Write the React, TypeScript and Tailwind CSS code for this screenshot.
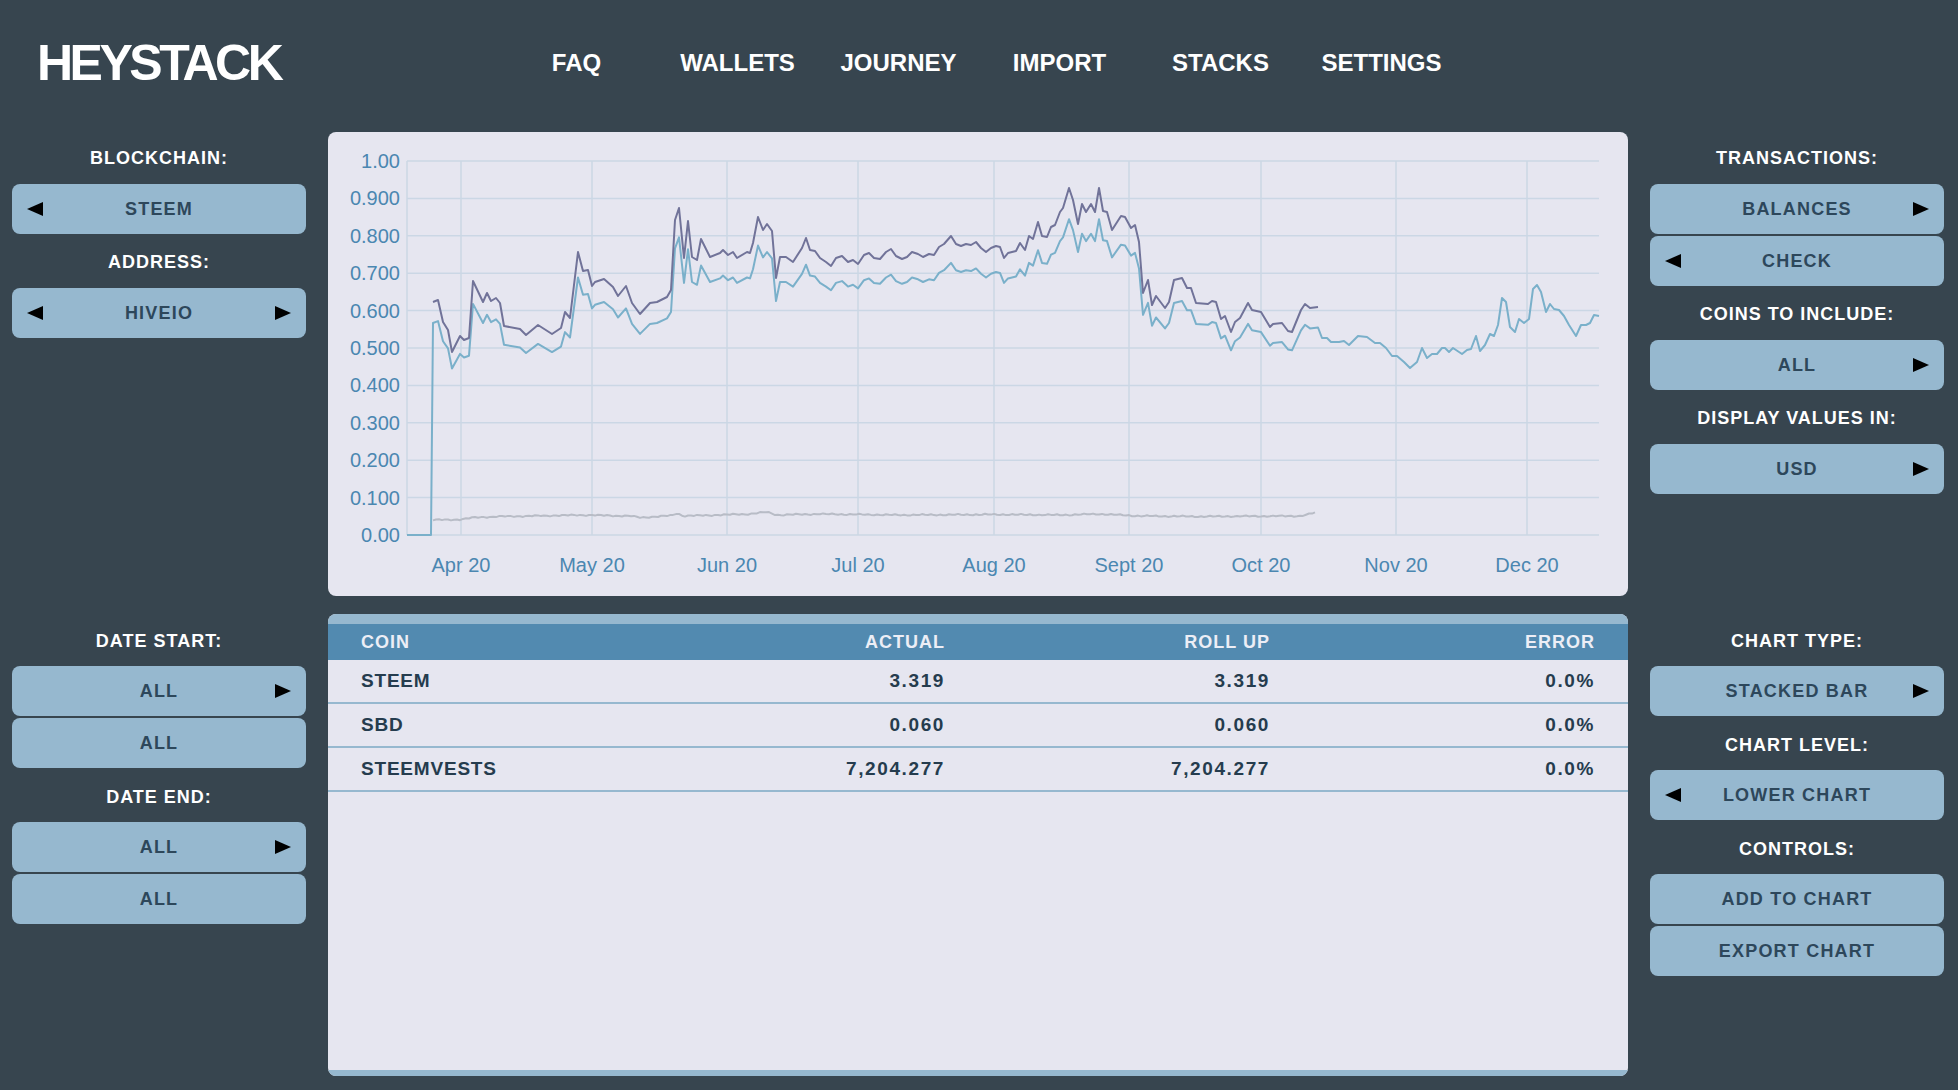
import React from "react";

type Pt = [number, number];

// purple series, page coordinates (chart svg uses a viewBox in page space)
const PURPLE: Pt[] = [
  [433, 302], [438, 300], [443, 322], [448, 330], [452, 352], [460, 336], [464, 340], [469, 338], [473, 281], [483, 302],
  [487, 293], [491, 301], [496, 298], [500, 303], [504, 326], [520, 329], [526, 335], [538, 325], [552, 334], [561, 328],
  [565, 312], [570, 318], [578, 252], [583, 271], [588, 270], [592, 286], [595, 282], [604, 279], [613, 287], [618, 296],
  [626, 286], [632, 303], [640, 314], [650, 303], [657, 302], [667, 297], [671, 290], [675, 220], [679, 208], [684, 258],
  [688, 221], [692, 257], [697, 260], [701, 239], [710, 257], [720, 253], [723, 250], [728, 255], [733, 252], [737, 258],
  [747, 252], [750, 253], [753, 243], [758, 217], [763, 230], [767, 224], [772, 231], [776, 278], [780, 257], [786, 257],
  [793, 262], [802, 248], [806, 238], [810, 250], [815, 251], [820, 258], [826, 262], [831, 266], [836, 258], [842, 256],
  [848, 262], [853, 260], [858, 264], [864, 255], [869, 253], [874, 258], [880, 259], [886, 252], [891, 249], [896, 256],
  [902, 259], [907, 257], [912, 252], [918, 254], [923, 257], [929, 254], [934, 255], [939, 247], [944, 244], [951, 236],
  [956, 244], [961, 246], [966, 244], [971, 245], [976, 242], [981, 248], [986, 252], [991, 248], [996, 246], [1000, 247],
  [1004, 258], [1008, 253], [1016, 251], [1020, 243], [1025, 250], [1029, 236], [1033, 239], [1038, 222], [1042, 236],
  [1047, 237], [1051, 227], [1055, 225], [1060, 212], [1063, 208], [1069, 188], [1073, 200], [1078, 224], [1082, 204],
  [1086, 212], [1091, 204], [1095, 212], [1099, 188], [1103, 211], [1107, 212], [1112, 230], [1121, 216], [1125, 217],
  [1131, 228], [1135, 225], [1139, 242], [1143, 293], [1148, 280], [1152, 305], [1156, 296], [1165, 308], [1169, 302],
  [1174, 280], [1182, 278], [1187, 288], [1191, 288], [1196, 303], [1208, 304], [1212, 301], [1216, 302], [1221, 319],
  [1225, 316], [1231, 332], [1235, 322], [1240, 318], [1248, 303], [1252, 310], [1261, 312], [1270, 327], [1273, 324],
  [1282, 323], [1288, 331], [1292, 332], [1301, 310], [1305, 304], [1310, 308], [1318, 307],
];

const BLUE_TAIL: Pt[] = [
  [1322, 338], [1327, 338], [1331, 342], [1339, 342], [1344, 341], [1349, 345], [1358, 336], [1367, 337], [1375, 343],
  [1380, 343], [1386, 348], [1392, 356], [1397, 356], [1404, 362], [1410, 368], [1417, 362], [1422, 348], [1427, 358],
  [1432, 354], [1437, 354], [1442, 348], [1445, 348], [1449, 352], [1453, 348], [1462, 354], [1467, 350], [1471, 349],
  [1476, 336], [1480, 351], [1485, 345], [1490, 334], [1494, 336], [1498, 325], [1502, 298], [1506, 302], [1510, 327],
  [1515, 332], [1519, 319], [1524, 323], [1529, 319], [1533, 289], [1537, 285], [1541, 292], [1546, 312], [1550, 304],
  [1554, 309], [1559, 310], [1564, 316], [1569, 325], [1576, 336], [1581, 325], [1586, 325], [1590, 323], [1594, 315],
  [1599, 316],
];

const BLUE: Pt[] = [
  [407, 535],
  [431, 535],
  ...PURPLE.map(([x, y]) => [x, 535 - (535 - y) * 0.91] as Pt),
  ...BLUE_TAIL,
];

const GRAY_KEYS: Pt[] = [
  [433, 520], [460, 519.5], [475, 517.5], [500, 516.5], [560, 515.5], [580, 515], [630, 516], [640, 517.5], [660, 516.5],
  [672, 515.5], [677, 513], [683, 516], [750, 514], [767, 512], [777, 515], [820, 514], [900, 515], [1000, 514.5],
  [1060, 515], [1100, 514], [1140, 516], [1200, 516.5], [1300, 516], [1310, 514], [1317, 512],
];

const GRAY: Pt[] = [];
for (let x = 433; x <= 1317; x += 3) {
  let i = 0;
  while (i < GRAY_KEYS.length - 2 && GRAY_KEYS[i + 1][0] < x) i++;
  const [x0, y0] = GRAY_KEYS[i];
  const [x1, y1] = GRAY_KEYS[i + 1];
  const t = Math.min(1, Math.max(0, (x - x0) / (x1 - x0)));
  GRAY.push([x, y0 + (y1 - y0) * t + 0.5 * Math.sin(x * 0.7) + 0.3 * Math.sin(x * 1.9)]);
}

const pts = (a: Pt[]) => a.map(([x, y]) => `${x},${y.toFixed(1)}`).join(" ");

const Y_LABELS = ["1.00", "0.900", "0.800", "0.700", "0.600", "0.500", "0.400", "0.300", "0.200", "0.100", "0.00"];
const X_TICKS: [number, string][] = [
  [461, "Apr 20"], [592, "May 20"], [727, "Jun 20"], [858, "Jul 20"], [994, "Aug 20"],
  [1129, "Sept 20"], [1261, "Oct 20"], [1396, "Nov 20"], [1527, "Dec 20"],
];

const Chart = () => {
  return (
    <svg viewBox="328 132 1300 464" width="1300" height="464" className="block">
      {Y_LABELS.map((l, i) => {
        const y = 161 + i * 37.4;
        return (
          <g key={l}>
            <line x1={407} x2={1599} y1={y} y2={y} stroke="#cbd7e5" strokeWidth={1.5} />
            <text x={400} y={y + 7} textAnchor="end" fontSize={20} fill="#4b87b1" fontFamily="Liberation Sans, Arial, sans-serif">
              {l}
            </text>
          </g>
        );
      })}
      <line x1={407} x2={407} y1={161} y2={535} stroke="#cbd7e5" strokeWidth={1.5} />
      {X_TICKS.map(([x, l]) => (
        <g key={l}>
          <line x1={x} x2={x} y1={161} y2={535} stroke="#cbd7e5" strokeWidth={1.5} />
          <text x={x} y={572} textAnchor="middle" fontSize={20} fill="#4b87b1" fontFamily="Liberation Sans, Arial, sans-serif">
            {l}
          </text>
        </g>
      ))}
      <polyline points={pts(GRAY)} fill="none" stroke="#b8bcc6" strokeWidth={2} strokeLinejoin="round" />
      <polyline points={pts(BLUE)} fill="none" stroke="#7ab0ca" strokeWidth={2} strokeLinejoin="round" />
      <polyline points={pts(PURPLE)} fill="none" stroke="#717399" strokeWidth={2} strokeLinejoin="round" />
    </svg>
  );
};

const Tri = ({ dir }: { dir: "left" | "right" }) => (
  <svg width="16" height="14" viewBox="0 0 16 14">
    <polygon points={dir === "left" ? "16,0 16,14 0,7" : "0,0 0,14 16,7"} fill="#000" />
  </svg>
);

type BtnProps = { text: string; left?: boolean; right?: boolean };

const Btn = ({ text, left, right }: BtnProps) => (
  <div className="h-[50px] rounded-[8px] bg-[#96b8cf] grid grid-cols-[46px_1fr_46px] items-center">
    <div className="flex justify-start pl-[15px]">{left && <Tri dir="left" />}</div>
    <div className="text-center text-[18px] font-bold tracking-[1.2px] text-[#2d475b]">{text}</div>
    <div className="flex justify-end pr-[15px]">{right && <Tri dir="right" />}</div>
  </div>
);

const Group = ({ label, buttons, top }: { label: string; buttons: BtnProps[]; top?: boolean }) => (
  <div className="flex flex-col">
    <div
      className={`h-[54px] ${top ? "pt-[2px]" : "pt-[4px]"} flex items-center justify-center text-white text-[18px] font-bold tracking-[1px]`}
    >
      {label}
    </div>
    <div className="flex flex-col gap-[2px]">
      {buttons.map((b, i) => (
        <Btn key={i} {...b} />
      ))}
    </div>
  </div>
);

const ROWS = [
  ["STEEM", "3.319", "3.319", "0.0%"],
  ["SBD", "0.060", "0.060", "0.0%"],
  ["STEEMVESTS", "7,204.277", "7,204.277", "0.0%"],
];

const Table = () => (
  <div className="mt-[2px] h-[462px] rounded-[8px] overflow-hidden bg-[#e6e6f0] flex flex-col">
    <div className="h-[10px] bg-[#96b8cf]" />
    <div className="h-[36px] bg-[#528ab0] grid grid-cols-4 items-center text-[18px] font-bold tracking-[1px] text-[#eceef6]">
      <div className="px-[33px]">COIN</div>
      <div className="px-[33px] text-right">ACTUAL</div>
      <div className="px-[33px] text-right">ROLL UP</div>
      <div className="px-[33px] text-right">ERROR</div>
    </div>
    {ROWS.map((r) => (
      <div key={r[0]} className="h-[44px] border-b-2 border-[#96b8cf] grid grid-cols-4 items-center text-[19px] font-bold text-[#253c4e]">
        <div className="px-[33px] tracking-[0.8px]">{r[0]}</div>
        <div className="px-[33px] text-right tracking-[1.6px]">{r[1]}</div>
        <div className="px-[33px] text-right tracking-[1.6px]">{r[2]}</div>
        <div className="px-[33px] text-right tracking-[1.6px]">{r[3]}</div>
      </div>
    ))}
    <div className="flex-1" />
    <div className="h-[6px] bg-[#96b8cf]" />
  </div>
);

const NAV = ["FAQ", "WALLETS", "JOURNEY", "IMPORT", "STACKS", "SETTINGS"];

export default function App() {
  return (
    <div className="w-[1958px] h-[1090px] bg-[#37454f] font-['Liberation_Sans',Arial,sans-serif] overflow-hidden">
      <header className="h-[130px] pb-[4px] grid grid-cols-[1fr_966px_1fr] items-center">
        <div className="pl-[37px] text-white text-[50px] font-bold leading-none tracking-[-0.07em]">HEYSTACK</div>
        <nav className="grid grid-cols-6">
          {NAV.map((n) => (
            <div key={n} className="text-center text-white text-[24px] font-bold leading-none">
              {n}
            </div>
          ))}
        </nav>
        <div />
      </header>

      <main className="pl-[12px] grid grid-cols-[294px_1300px_294px] grid-rows-[466px_464px] gap-x-[22px] gap-y-[16px]">
        <div className="flex flex-col">
          <Group top label="BLOCKCHAIN:" buttons={[{ text: "STEEM", left: true }]} />
          <Group top label="ADDRESS:" buttons={[{ text: "HIVEIO", left: true, right: true }]} />
        </div>

        <div className="mt-[2px] h-[464px] rounded-[8px] bg-[#e6e6f0] overflow-hidden">
          <Chart />
        </div>

        <div className="flex flex-col">
          <Group top label="TRANSACTIONS:" buttons={[{ text: "BALANCES", right: true }, { text: "CHECK", left: true }]} />
          <Group top label="COINS TO INCLUDE:" buttons={[{ text: "ALL", right: true }]} />
          <Group top label="DISPLAY VALUES IN:" buttons={[{ text: "USD", right: true }]} />
        </div>

        <div className="flex flex-col">
          <Group label="DATE START:" buttons={[{ text: "ALL", right: true }, { text: "ALL" }]} />
          <Group label="DATE END:" buttons={[{ text: "ALL", right: true }, { text: "ALL" }]} />
        </div>

        <Table />

        <div className="flex flex-col">
          <Group label="CHART TYPE:" buttons={[{ text: "STACKED BAR", right: true }]} />
          <Group label="CHART LEVEL:" buttons={[{ text: "LOWER CHART", left: true }]} />
          <Group label="CONTROLS:" buttons={[{ text: "ADD TO CHART" }, { text: "EXPORT CHART" }]} />
        </div>
      </main>
    </div>
  );
}
